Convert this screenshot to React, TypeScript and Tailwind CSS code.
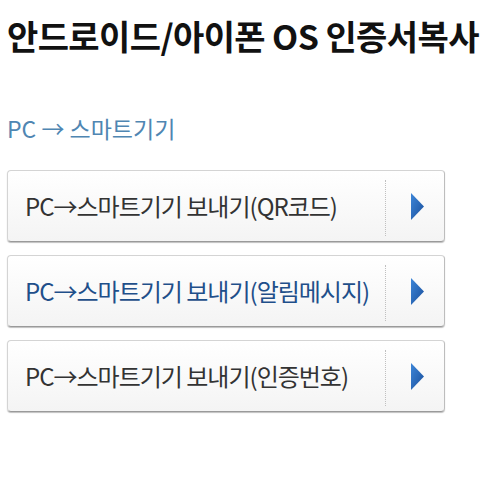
import React from 'react';

const items = [
  { label: 'PC→스마트기기 보내기(QR코드)', active: false },
  { label: 'PC→스마트기기 보내기(알림메시지)', active: true },
  { label: 'PC→스마트기기 보내기(인증번호)', active: false },
];

function Arrow() {
  return (
    <svg width="13" height="27" viewBox="0 0 13 27">
      <defs>
        <linearGradient id="arr" x1="0" y1="0" x2="1" y2="1">
          <stop offset="0" stopColor="#3d86d8" />
          <stop offset="1" stopColor="#1a4f9c" />
        </linearGradient>
      </defs>
      <polygon points="0,0 13,13.5 0,27" fill="url(#arr)" />
    </svg>
  );
}

export default function App() {
  return (
    <div
      className="w-[500px] h-[500px] bg-white px-[7px] overflow-hidden"
      style={{ fontFamily: '"Noto Sans CJK KR", "Noto Sans", sans-serif' }}
    >
      <h1 className="pt-[13px] text-[34px] font-bold leading-[46px] text-[#111] tracking-[-0.6px]">
        안드로이드/아이폰 OS 인증서복사
      </h1>
      <p className="mt-[54px] text-[23px] leading-[30px] text-[#4f86b2]">PC → 스마트기기</p>
      <div className="mt-[27px] flex flex-col gap-[13px] w-[438px]">
        {items.map((item) => (
          <div
            key={item.label}
            className="flex h-[72px] items-center rounded-[4px] border border-[#d4d4d4] border-b-[#9a9a9a] border-r-[#bdbdbd] bg-gradient-to-b from-white to-[#f4f4f4] shadow-[0_1px_1px_rgba(0,0,0,0.25)]"
          >
            <span
              className={`flex-1 pl-[17px] text-[24px] tracking-[-1px] ${
                item.active ? 'text-[#1f4f8a]' : 'text-[#333]'
              }`}
            >
              {item.label}
            </span>
            <div className="mt-[3px] h-[56px] border-l border-dotted border-[#c0c0c0]" />
            <div className="flex w-[58px] justify-center pl-[4px]">
              <Arrow />
            </div>
          </div>
        ))}
      </div>
    </div>
  );
}
